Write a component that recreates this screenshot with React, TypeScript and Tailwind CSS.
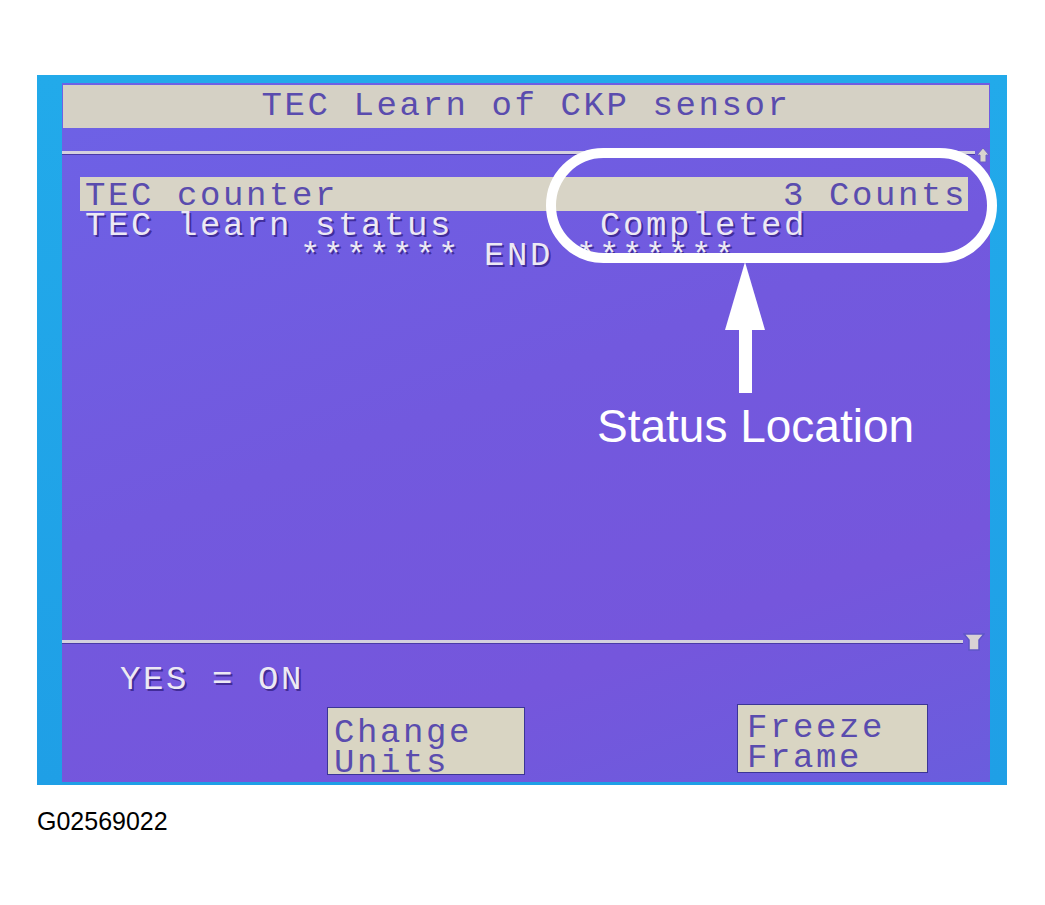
import React from "react";

const mono = "font-['Liberation_Mono','DejaVu_Sans_Mono',monospace] text-[34px] tracking-[2.6px]";
const onPurple = "text-[#ece9f4] [text-shadow:2px_2px_0_rgba(50,30,130,0.75)]";
const onBeige = "text-[#5a4cae]";

function UpArrow() {
  return (
    <svg width="14" height="16" viewBox="0 0 14 16" className="ml-[1px] -mt-[4px] shrink-0">
      <path d="M7 1 L13 8 L10 8 L10 15 L4 15 L4 8 L1 8 Z" fill="#d9d4cf" stroke="#6c5fc4" strokeWidth="1" />
    </svg>
  );
}

function DownArrow() {
  return (
    <svg width="22" height="20" viewBox="0 0 22 20" className="-mt-[8px] shrink-0">
      <path d="M1 2 L21 2 L16 8 L16 18 L6 18 L6 8 Z" fill="#d8d2d4" stroke="#5f55c8" strokeWidth="1.5" />
    </svg>
  );
}

export default function App() {
  return (
    <div className="relative w-[1045px] h-[905px] bg-white overflow-hidden">
      {/* Scan tool screen */}
      <div className="ml-[37px] mt-[75px] w-[970px] h-[710px] bg-[linear-gradient(180deg,#22aaea,#1f9fe6)] pt-[8px] pl-[25px] pr-[17px] pb-[3px]">
        <div
          className={`flex h-full flex-col pb-[7px] bg-[linear-gradient(160deg,#6d62e6_0%,#7259de_45%,#7556dc_75%,#6a5ddd_100%)] ${mono}`}
        >
          {/* Title */}
          <div
            className={`mx-[1px] mt-[2px] h-[43px] bg-[#d5d1c5] text-center leading-[43px] whitespace-pre ${onBeige}`}
          >
            TEC Learn of CKP sensor
          </div>

          {/* top rule */}
          <div className="mt-[23px] flex h-[3px] items-start">
            <div className="h-[3px] w-[913px] bg-[#d4d0de] shadow-[0_1px_0_#4a3aa8]" />
            <UpArrow />
          </div>

          {/* Data rows */}
          <div className="mt-[23px] ml-[18px] w-[888px]">
            <div className={`flex h-[34px] justify-between bg-[#d8d4c6] pl-[5px] pr-[1px] leading-[38px] whitespace-pre ${onBeige}`}>
              <span>TEC counter</span>
              <span>3 Counts</span>
            </div>
            <div className={`flex h-[30px] pl-[5px] leading-[31px] whitespace-pre ${onPurple}`}>
              <span className="w-[515px]">TEC learn status</span>
              <span>Completed</span>
            </div>
            <div className={`h-[30px] pl-[220px] leading-[31px] whitespace-pre ${onPurple}`}>
              ******* END *******
            </div>
          </div>

          <div className="flex-1" />

          {/* bottom rule */}
          <div className="flex h-[3px] items-start">
            <div className="h-[3px] w-[901px] bg-[#d4d0de] shadow-[0_1px_0_#4a3aa8]" />
            <DownArrow />
          </div>

          <div className={`mt-[22px] ml-[58px] h-[30px] leading-[31px] whitespace-pre ${onPurple}`}>
            YES = ON
          </div>

          {/* Soft keys */}
          <div className="mt-[9px] flex items-start">
            <div
              className={`ml-[265px] mt-[3px] h-[68px] w-[198px] border border-[#3b3596] bg-[#d9d5c3] pl-[6px] pt-[10px] leading-[30px] ${onBeige}`}
            >
              <div>Change</div>
              <div>Units</div>
            </div>
            <div
              className={`ml-[212px] h-[69px] w-[191px] border border-[#3b3596] bg-[#d9d5c3] pl-[9px] pt-[8px] leading-[30px] ${onBeige}`}
            >
              <div>Freeze</div>
              <div>Frame</div>
            </div>
          </div>
        </div>
      </div>

      {/* Figure id */}
      <div className="ml-[37px] mt-[24px] text-[25px] leading-[25px] text-black font-['Liberation_Sans',Arial,sans-serif]">
        G02569022
      </div>

      {/* Annotation overlay */}
      <svg className="absolute left-0 top-0" width="1045" height="905" viewBox="0 0 1045 905">
        <rect x="551" y="153" width="441" height="105" rx="52.5" fill="none" stroke="#ffffff" strokeWidth="10" />
        <polygon points="745,262 765,330 725,330" fill="#ffffff" />
        <rect x="739" y="329" width="13" height="64" fill="#ffffff" />
      </svg>
      <div className="absolute left-[597px] top-[400px] text-[46px] leading-[52px] text-white font-['Liberation_Sans',Arial,sans-serif]">
        Status Location
      </div>
    </div>
  );
}
